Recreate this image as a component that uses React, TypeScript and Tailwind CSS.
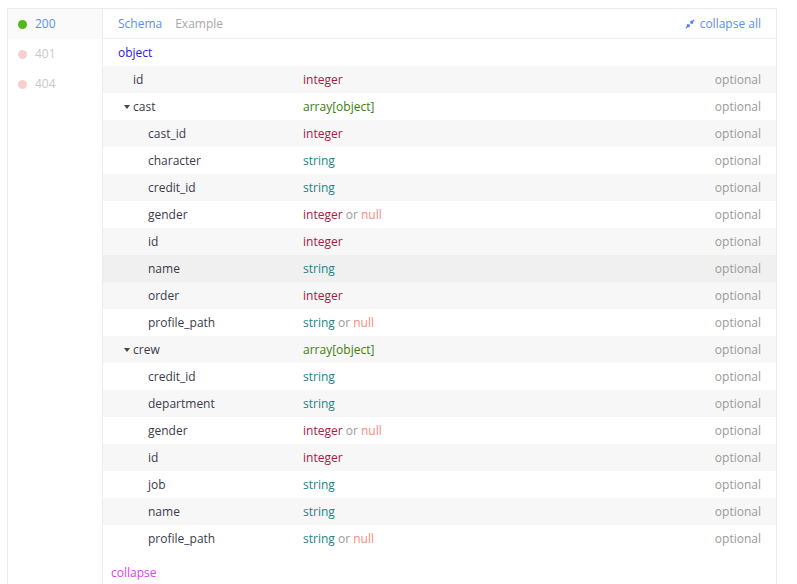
import React from "react";

type Part = { t: string; c: string };
type Row = { name: string; depth: number; caret?: boolean; type: Part[]; hover?: boolean };

const INT = "#a3213f";
const STR = "#1a8585";
const ARR = "#3e7c10";
const NUL = "#fb8a7c";
const OR = "#9a9a9a";

const integer: Part[] = [{ t: "integer", c: INT }];
const string: Part[] = [{ t: "string", c: STR }];
const intNull: Part[] = [{ t: "integer", c: INT }, { t: " or ", c: OR }, { t: "null", c: NUL }];
const strNull: Part[] = [{ t: "string", c: STR }, { t: " or ", c: OR }, { t: "null", c: NUL }];
const arr: Part[] = [{ t: "array[object]", c: ARR }];

const rows: Row[] = [
  { name: "id", depth: 1, type: integer },
  { name: "cast", depth: 1, caret: true, type: arr },
  { name: "cast_id", depth: 2, type: integer },
  { name: "character", depth: 2, type: string },
  { name: "credit_id", depth: 2, type: string },
  { name: "gender", depth: 2, type: intNull },
  { name: "id", depth: 2, type: integer },
  { name: "name", depth: 2, type: string, hover: true },
  { name: "order", depth: 2, type: integer },
  { name: "profile_path", depth: 2, type: strNull },
  { name: "crew", depth: 1, caret: true, type: arr },
  { name: "credit_id", depth: 2, type: string },
  { name: "department", depth: 2, type: string },
  { name: "gender", depth: 2, type: intNull },
  { name: "id", depth: 2, type: integer },
  { name: "job", depth: 2, type: string },
  { name: "name", depth: 2, type: string },
  { name: "profile_path", depth: 2, type: strNull },
];

function CollapseIcon() {
  return (
    <svg width="10" height="10" viewBox="0 0 10 10" className="mr-[5px]">
      <path d="M9 1 L6 4 M6 1.8 L6 4 L8.2 4" stroke="#4f7ef0" strokeWidth="1.4" fill="none" />
      <path d="M1 9 L4 6 M1.8 6 L4 6 L4 8.2" stroke="#4f7ef0" strokeWidth="1.4" fill="none" />
    </svg>
  );
}

export default function App() {
  return (
    <div
      className="w-[797px] h-[584px] bg-white overflow-hidden pt-[8px] pl-[7px]"
      style={{ fontFamily: '"Open Sans", "Noto Sans", sans-serif' }}
    >
      <div className="w-[770px] h-[600px] border border-[#ececec] flex text-[12px]">
        {/* left column */}
        <div className="w-[95px] shrink-0 border-r border-[#ececec] flex flex-col">
          <div className="h-[30px] bg-[#fafafa] flex items-center pl-[10px]">
            <span className="w-[9px] h-[9px] rounded-full bg-[#52b81a] mr-[8px]" />
            <span className="text-[#5b8ff5]">200</span>
          </div>
          <div className="h-[30px] flex items-center pl-[10px]">
            <span className="w-[9px] h-[9px] rounded-full bg-[#f7cfcf] mr-[8px]" />
            <span className="text-[#c8c8c8]">401</span>
          </div>
          <div className="h-[30px] flex items-center pl-[10px]">
            <span className="w-[9px] h-[9px] rounded-full bg-[#f7cfcf] mr-[8px]" />
            <span className="text-[#c8c8c8]">404</span>
          </div>
        </div>
        {/* right panel */}
        <div className="flex-1 flex flex-col">
          <div className="h-[30px] border-b border-[#f0f0f0] flex items-center pl-[15px] pr-[15px]">
            <span className="text-[#5b8ff5] mr-[13px]">Schema</span>
            <span className="text-[#a8a8a8]">Example</span>
            <span className="ml-auto flex items-center text-[#5b8ff5]">
              <CollapseIcon />
              collapse all
            </span>
          </div>
          <div className="h-[27px] flex items-center pl-[15px] text-[#2a18e0]">object</div>
          {rows.map((r, i) => {
            const bg = r.hover ? "bg-[#f0f0f0]" : i % 2 === 0 ? "bg-[#f7f7f7]" : "bg-white";
            return (
              <div key={i} className={`h-[27px] flex items-center pr-[15px] ${bg}`}>
                <div className={`w-[200px] flex items-center text-[#3b3b4b] ${r.depth === 1 ? "pl-[30px]" : "pl-[45px]"}`}>
                  {r.caret && (
                    <svg width="6" height="4" viewBox="0 0 6 4" className="ml-[-9px] mr-[3px]">
                      <path d="M0 0 L6 0 L3 4 Z" fill="#444" />
                    </svg>
                  )}
                  {r.name}
                </div>
                <div className="flex-1">
                  {r.type.map((p, j) => (
                    <span key={j} style={{ color: p.c }}>
                      {p.t}
                    </span>
                  ))}
                </div>
                <div className="text-[#9a9a9a]">optional</div>
              </div>
            );
          })}
          <div className="pl-[8px] pt-[11px] text-[#e040f5] leading-[20px]">collapse</div>
        </div>
      </div>
    </div>
  );
}
